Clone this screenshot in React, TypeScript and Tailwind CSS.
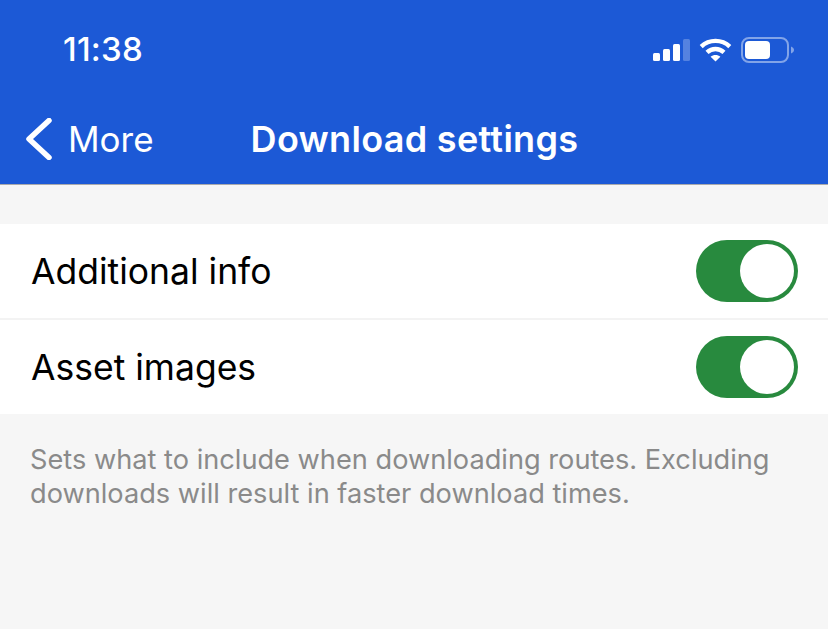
import { useState } from 'react';

const font = { fontFamily: 'Inter, "Noto Sans", sans-serif' };

function StatusIcons() {
  return (
    <div className="flex items-center">
      {/* signal bars */}
      <svg width="37" height="22" viewBox="0 0 37 22" fill="#fff">
        <rect x="0" y="14" width="7" height="8" rx="1.5" />
        <rect x="10" y="10" width="7" height="12" rx="1.5" />
        <rect x="20" y="5" width="7" height="17" rx="1.5" />
        <rect x="30" y="0" width="7" height="22" rx="1.5" fillOpacity="0.25" />
      </svg>
      {/* wifi */}
      <svg className="ml-[9px]" width="33" height="24" viewBox="0 0 33 24" fill="none" stroke="#fff" strokeWidth="4.4">
        <path d="M2.2 8.6C10.2 1 22.8 1 30.8 8.6" />
        <path d="M8 14.4C13 9.8 20 9.8 25 14.4" />
        <path d="M16.5 23.5L11.6 18.7C14.4 16.4 18.6 16.4 21.4 18.7Z" fill="#fff" stroke="none" />
      </svg>
      {/* battery */}
      <svg className="ml-[9px]" width="54" height="26" viewBox="0 0 54 26" fill="none">
        <rect x="1" y="1" width="46" height="24" rx="7" stroke="#fff" strokeOpacity="0.45" strokeWidth="2" />
        <rect x="4" y="4" width="25" height="18" rx="4" fill="#fff" />
        <path d="M50 9.5C52 10.2 53 11.5 53 13C53 14.5 52 15.8 50 16.5Z" fill="#fff" fillOpacity="0.45" />
      </svg>
    </div>
  );
}

function Toggle({ on, onChange }: { on: boolean; onChange: () => void }) {
  return (
    <button
      onClick={onChange}
      className={`flex h-[62px] w-[102px] items-center rounded-full p-[4px] ${
        on ? 'justify-end bg-[#288a3e]' : 'justify-start bg-[#d9d9dc]'
      }`}
    >
      <span className="block h-[54px] w-[54px] rounded-full bg-white" />
    </button>
  );
}

function SettingRow({ label, last }: { label: string; last?: boolean }) {
  const [on, setOn] = useState(true);
  return (
    <div
      className={`flex items-center justify-between pl-[31px] pr-[30px] ${
        last ? 'h-[94px]' : 'h-[96px] border-b-2 border-[#f3f3f3]'
      }`}
    >
      <span className="mt-[2px] text-[35.5px] leading-[40px] text-black">{label}</span>
      <Toggle on={on} onChange={() => setOn(!on)} />
    </div>
  );
}

export default function App() {
  return (
    <div className="flex h-[629px] w-[828px] flex-col overflow-hidden bg-[#f6f6f6]" style={font}>
      <header className="h-[185px] shrink-0 border-b border-[#a9a9ac] bg-[#1c59d6] text-white">
        <div className="flex h-[99px] items-center justify-between pl-[63px] pr-[33px]">
          <span className="text-[33px] font-medium leading-none tracking-[0.2px]">11:38</span>
          <StatusIcons />
        </div>
        <div className="relative flex h-[80px] items-center pl-[26px]">
          <svg width="26" height="42" viewBox="0 0 26 42" fill="none" stroke="#fff" strokeWidth="5.5" strokeLinecap="round" strokeLinejoin="round">
            <path d="M23 2.5L3 21L23 39.5" />
          </svg>
          <span className="ml-[16px] text-[35px] leading-none">More</span>
          <h1 className="ml-[97px] text-[36px] font-semibold leading-none tracking-[0.3px]">Download settings</h1>
        </div>
      </header>

      <section className="mt-[39px] bg-white">
        <SettingRow label="Additional info" />
        <SettingRow label="Asset images" last />
      </section>

      <p className="mt-[29px] w-[780px] pl-[30px] text-[27.2px] leading-[34px] text-[#8a8a8a]">
        Sets what to include when downloading routes. Excluding downloads will result in faster download times.
      </p>
    </div>
  );
}
